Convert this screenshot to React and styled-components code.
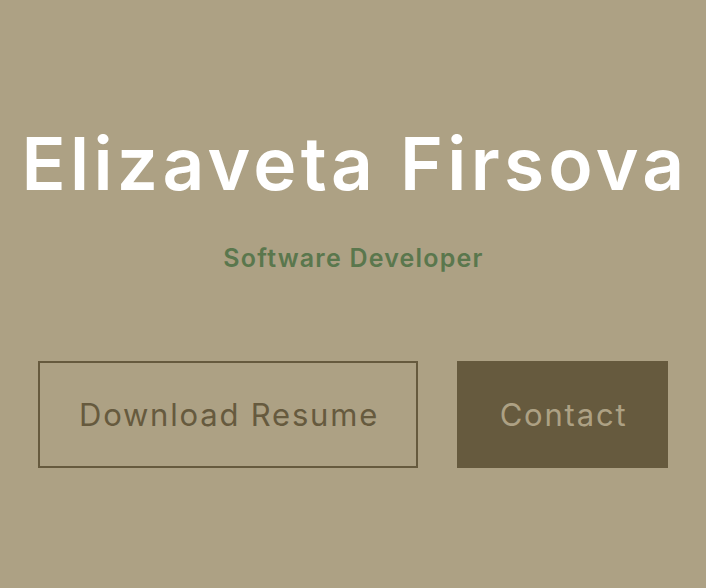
import React from 'react'
import styled, { createGlobalStyle } from 'styled-components'

const GlobalStyle = createGlobalStyle`
  html, body {
    margin: 0;
    padding: 0;
    background: #ada184;
  }
  body {
    font-family: Inter, "Open Sans", sans-serif;
  }
`

const Page = styled.div`
  width: 706px;
  height: 588px;
  display: flex;
  flex-direction: column;
  align-items: center;
  background: #ada184;
  box-sizing: border-box;
  padding-top: 118px;
`

const Title = styled.h1`
  margin: 0;
  padding-left: 4px;
  color: #ffffff;
  font-size: 73px;
  font-weight: 600;
  line-height: 92px;
  letter-spacing: 4.3px;
  white-space: nowrap;
`

const Subtitle = styled.h2`
  margin: 33px 0 0;
  padding-left: 1px;
  color: #5a774d;
  font-size: 25px;
  font-weight: 600;
  line-height: 30px;
  letter-spacing: 1.2px;
`

const Actions = styled.div`
  display: flex;
  gap: 39px;
  margin-top: 88px;
`

const ActionButton = styled.button`
  box-sizing: border-box;
  height: 107px;
  padding: 0 0 0 2px;
  font-family: inherit;
  font-size: 31px;
  font-weight: 400;
  letter-spacing: 1.8px;
  border: 2px solid #665a3e;
  background: ${p => (p.$filled ? '#665a3e' : 'transparent')};
  color: ${p => (p.$filled ? '#ada184' : '#665a3e')};
  width: ${p => p.$width}px;
  cursor: pointer;
`

export default function App() {
  return (
    <>
      <GlobalStyle />
      <Page>
        <Title>Elizaveta Firsova</Title>
        <Subtitle>Software Developer</Subtitle>
        <Actions>
          <ActionButton $width={380}>Download Resume</ActionButton>
          <ActionButton $filled $width={211}>Contact</ActionButton>
        </Actions>
      </Page>
    </>
  )
}
